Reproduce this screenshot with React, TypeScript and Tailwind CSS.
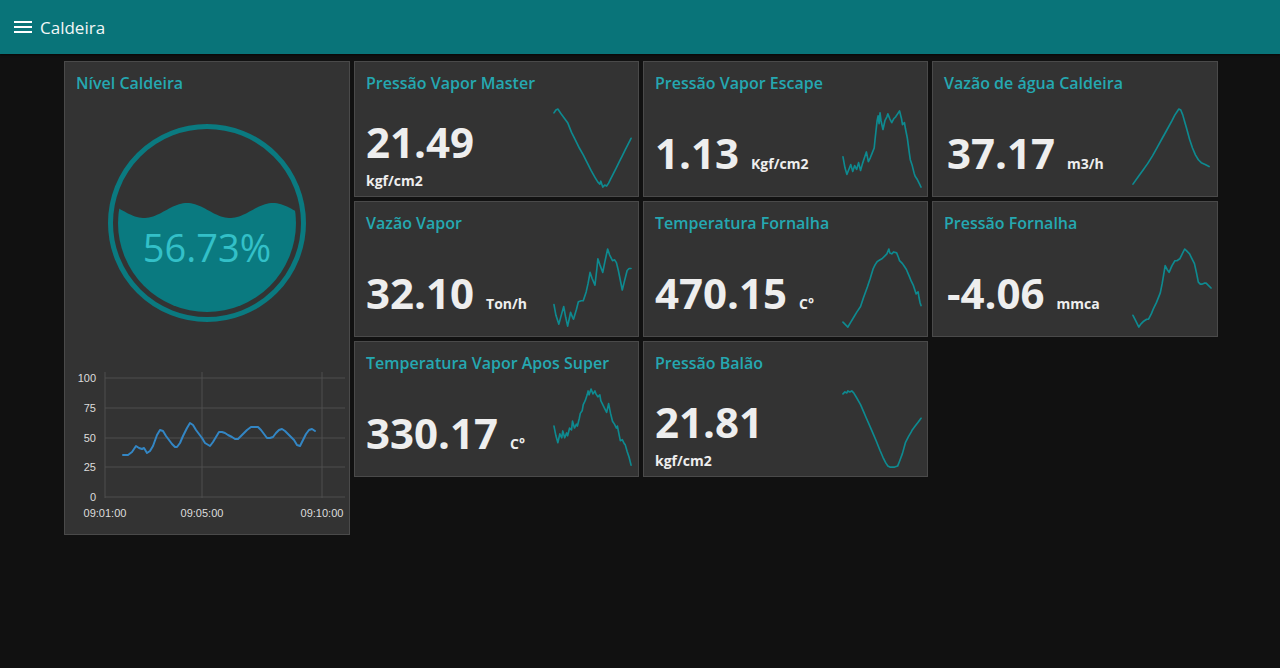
import React from "react";

type Pt = [number, number];

const SPARKS: Record<string, Pt[]> = {
  master: [[0,4],[2,1],[4,0],[6,3],[8,6],[11,10],[14,14],[18,24],[22,32],[26,40],[30,47],[34,55],[38,63],[42,70],[45,75],[47,77],[48,74],[50,80],[52,78],[54,79],[56,76],[58,72],[61,66],[64,60],[67,54],[70,48],[73,42],[76,36],[79,30]],
  escape: [[0,49],[2,60],[4,67],[6,62],[8,57],[10,64],[12,58],[14,62],[16,55],[18,63],[20,56],[22,50],[24,44],[26,54],[28,50],[30,45],[32,40],[33,30],[35,12],[36,7],[37,15],[38,4],[39,12],[41,21],[43,12],[45,8],[46,5],[48,10],[50,14],[52,10],[54,8],[56,5],[58,2],[60,10],[61,16],[63,14],[64,20],[66,30],[68,45],[69,52],[71,58],[73,66],[74,69],[76,72],[78,76],[80,80]],
  agua: [[0,77],[5,70],[10,63],[15,56],[20,48],[25,39],[30,30],[35,21],[40,12],[43,6],[45,3],[47,0],[49,1],[51,6],[53,13],[55,20],[58,31],[61,40],[64,47],[67,52],[70,55],[74,57],[78,59]],
  vapor: [[0,57],[2,68],[5,77],[8,66],[10,59],[12,70],[14,79],[16,70],[17,65],[19,70],[20,72],[23,62],[25,54],[28,53],[30,53],[33,44],[35,35],[37,24],[39,30],[42,37],[44,20],[45,10],[47,16],[50,24],[52,14],[55,0],[57,6],[60,12],[62,11],[64,14],[66,22],[68,32],[70,42],[72,34],[75,22],[77,20],[79,20]],
  fornalhaT: [[0,75],[3,78],[5,80],[8,75],[11,70],[14,65],[18,59],[21,50],[25,39],[28,30],[31,20],[33,16],[35,13],[38,11],[40,10],[43,7],[45,5],[47,0],[48,4],[50,5],[52,3],[55,4],[57,9],[58,12],[61,15],[63,18],[65,21],[68,28],[70,33],[72,37],[74,43],[75,46],[77,44],[78,50],[79,55],[80,58]],
  fornalhaP: [[0,68],[3,74],[6,80],[8,77],[11,74],[14,72],[16,72],[19,66],[21,61],[24,55],[28,45],[30,35],[33,17],[35,21],[37,24],[40,17],[43,12],[45,12],[48,10],[50,6],[53,0],[55,2],[58,5],[60,9],[63,15],[65,24],[67,34],[69,36],[71,36],[73,35],[75,35],[77,37],[80,40]],
  super: [[0,38],[2,48],[4,55],[6,46],[8,50],[9,43],[11,50],[13,45],[14,48],[16,40],[18,42],[19,33],[21,40],[23,36],[24,38],[26,30],[27,25],[29,22],[30,16],[32,12],[34,6],[35,2],[36,6],[38,0],[40,5],[42,2],[43,5],[45,8],[47,6],[48,12],[50,16],[52,20],[54,24],[56,15],[58,25],[60,33],[62,36],[64,40],[65,38],[67,48],[68,53],[70,52],[72,56],[73,57],[75,64],[77,70],[79,78]],
  balao: [[0,5],[2,3],[4,4],[5,2],[7,3],[9,2],[11,4],[14,9],[18,16],[21,23],[24,30],[28,39],[31,46],[34,53],[38,63],[41,70],[44,76],[46,79],[48,80],[51,80],[53,80],[56,79],[58,74],[61,66],[64,55],[67,49],[70,44],[71,42],[74,38],[77,34],[80,30]],
};

function Spark({ pts }: { pts: Pt[] }) {
  return (
    <svg width={80} height={82} viewBox="-1 -1 82 84" className="mt-[2px] mr-[5px] shrink-0">
      <polyline
        points={pts.map(([x, y]) => `${x},${y}`).join(" ")}
        fill="none"
        stroke="#0e8a90"
        strokeWidth={1.7}
        strokeLinejoin="round"
        strokeLinecap="round"
      />
    </svg>
  );
}

type CardProps = {
  title: string;
  value: string;
  unit: string;
  stacked?: boolean;
  spark: Pt[];
  shift?: boolean;
};

function Card({ title, value, unit, stacked, spark, shift }: CardProps) {
  return (
    <div className="h-[136px] bg-[#333333] border border-[#4a4a4a] flex flex-col">
      <div className="h-[44px] pl-[11px] pt-[10px] text-[16px] leading-[22px] font-semibold text-[#25a8b1] whitespace-nowrap">
        {title}
      </div>
      <div className="flex flex-1">
        {stacked ? (
          <div className="flex-1 pl-[11px] pt-[15px] text-[#eeeeee]">
            <div className="text-[42px] leading-[42px] font-bold">{value}</div>
            <div className="mt-[9px] text-[14px] leading-[18px] font-bold">{unit}</div>
          </div>
        ) : (
          <div className={"flex-1 pt-[26px] text-[#eeeeee] flex items-baseline " + (shift ? "pl-[14px]" : "pl-[11px]")}>
            <div className="text-[42px] leading-[42px] font-bold">{value}</div>
            <div className="ml-[12px] text-[14px] leading-[18px] font-bold">{unit}</div>
          </div>
        )}
        <Spark pts={spark} />
      </div>
    </div>
  );
}

function Gauge() {
  const pts: string[] = [];
  for (let x = -2; x <= 202; x += 2) {
    const y = 87.5 - 7.5 * Math.cos((2 * Math.PI * (x - 80)) / 86);
    pts.push(`${x},${y.toFixed(2)}`);
  }
  const d = `M ${pts.join(" L ")} L 202,202 L -2,202 Z`;
  return (
    <svg width={200} height={200} viewBox="0 0 200 200">
      <defs>
        <clipPath id="gclip">
          <circle cx={100} cy={100} r={89} />
        </clipPath>
      </defs>
      <circle cx={100} cy={100} r={96.5} fill="none" stroke="#0a7a80" strokeWidth={5} />
      <path d={d} fill="#0a7a80" clipPath="url(#gclip)" />
      <text
        x={100}
        y={139}
        textAnchor="middle"
        fontSize={38}
        fontWeight={400}
        fill="#33c0c8"
        fontFamily="'Open Sans', sans-serif"
      >
        56.73%
      </text>
    </svg>
  );
}

const LINE: Pt[] = [[123,455],[128,455],[132,452],[136,446],[139,448],[142,449],[144,448],[147,453],[150,451],[153,446],[157,435],[160,430],[163,431],[166,436],[169,440],[172,444],[175,447],[177,447],[180,443],[183,436],[187,428],[190,423],[193,425],[196,430],[199,434],[202,438],[205,443],[210,446],[213,442],[216,437],[219,432],[222,432],[225,433],[228,435],[232,437],[235,439],[238,439],[241,436],[244,433],[247,430],[251,427],[255,427],[258,427],[261,430],[264,434],[267,438],[270,438],[273,437],[276,433],[279,430],[282,429],[285,431],[288,434],[291,437],[294,440],[297,445],[300,446],[303,440],[306,434],[309,430],[312,429],[315,431]];

function Chart() {
  const ox = 65;
  const oy = 365;
  const ys = [
    { v: "100", y: 378 },
    { v: "75", y: 408 },
    { v: "50", y: 438 },
    { v: "25", y: 467 },
    { v: "0", y: 497 },
  ];
  const xs = [
    { t: "09:01:00", x: 105 },
    { t: "09:05:00", x: 202 },
    { t: "09:10:00", x: 322 },
  ];
  return (
    <svg width={284} height={160} viewBox="0 0 284 160">
      {ys.map((r) => (
        <line key={r.v} x1={105 - ox} x2={345 - ox} y1={r.y - oy} y2={r.y - oy} stroke="#4e4e4e" strokeWidth={1} />
      ))}
      {xs.map((c) => (
        <line key={c.t} x1={c.x - ox} x2={c.x - ox} y1={372 - oy} y2={498 - oy} stroke="#4e4e4e" strokeWidth={1} />
      ))}
      {ys.map((r) => (
        <text key={r.v} x={96 - ox} y={r.y - oy + 4} textAnchor="end" fontSize={11} fill="#dddddd" fontFamily="'Liberation Sans', Arial, sans-serif">
          {r.v}
        </text>
      ))}
      {xs.map((c) => (
        <text key={c.t} x={c.x - ox} y={513 - oy + 4} textAnchor="middle" fontSize={11} fill="#dddddd" fontFamily="'Liberation Sans', Arial, sans-serif">
          {c.t}
        </text>
      ))}
      <polyline
        points={LINE.map(([x, y]) => `${x - ox},${y - oy}`).join(" ")}
        fill="none"
        stroke="#3386c4"
        strokeWidth={2}
        strokeLinejoin="round"
        strokeLinecap="round"
      />
    </svg>
  );
}

export default function App() {
  return (
    <div className="min-h-[668px] bg-[#111111] font-['Open_Sans',sans-serif]">
      <header className="h-[54px] bg-[#097479] flex items-center shadow-[0_1px_2px_rgba(0,0,0,0.6)]">
        <svg width={18} height={12} viewBox="0 0 18 12" className="ml-[14px]">
          <rect x={0} y={0} width={18} height={2} fill="#ffffff" />
          <rect x={0} y={5} width={18} height={2} fill="#ffffff" />
          <rect x={0} y={10} width={18} height={2} fill="#ffffff" />
        </svg>
        <span className="ml-[8px] text-[17px] text-[#f2f7f7] leading-none">Caldeira</span>
      </header>
      <main className="pt-[7px] pl-[64px] flex items-start gap-[4px]">
        <div className="w-[286px] h-[474px] bg-[#333333] border border-[#4a4a4a] flex flex-col">
          <div className="h-[44px] pl-[11px] pt-[10px] text-[16px] leading-[22px] font-semibold text-[#25a8b1]">
            Nível Caldeira
          </div>
          <div className="mt-[17px] flex justify-center">
            <Gauge />
          </div>
          <div className="mt-[42px]">
            <Chart />
          </div>
        </div>
        <div className="grid grid-cols-[285px_285px_286px] auto-rows-[136px] gap-[4px]">
          <Card title="Pressão Vapor Master" value="21.49" unit="kgf/cm2" stacked spark={SPARKS.master} />
          <Card title="Pressão Vapor Escape" value="1.13" unit="Kgf/cm2" spark={SPARKS.escape} />
          <Card title="Vazão de água Caldeira" value="37.17" unit="m3/h" spark={SPARKS.agua} shift />
          <Card title="Vazão Vapor" value="32.10" unit="Ton/h" spark={SPARKS.vapor} />
          <Card title="Temperatura Fornalha" value="470.15" unit="C°" spark={SPARKS.fornalhaT} />
          <Card title="Pressão Fornalha" value="-4.06" unit="mmca" spark={SPARKS.fornalhaP} shift />
          <Card title="Temperatura Vapor Apos Super" value="330.17" unit="C°" spark={SPARKS.super} />
          <Card title="Pressão Balão" value="21.81" unit="kgf/cm2" stacked spark={SPARKS.balao} />
        </div>
      </main>
    </div>
  );
}
